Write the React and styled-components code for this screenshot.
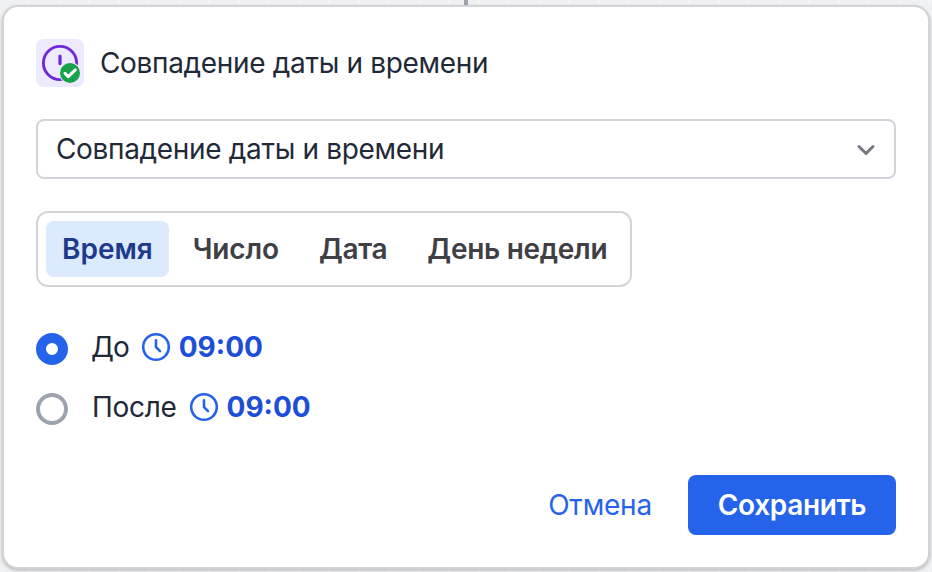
import React from "react";
import styled, { createGlobalStyle } from "styled-components";

const Global = createGlobalStyle`
  * { box-sizing: border-box; }
  body { margin: 0; background: #f0f1f3; font-family: Inter, "Noto Sans", sans-serif; color: #1f2937; overflow: hidden; }
  button { font: inherit; border: 0; background: none; padding: 0; cursor: pointer; }
`;
const Canvas = styled.main`
  height: 572px;
  padding: 0 2px;
  display: flex;
  flex-direction: column;
  align-items: center;
  background: radial-gradient(circle at 15px 15px, #fafafa 1px, transparent 1.6px) 14px -13px / 30px 30px;
`;
const Connector = styled.div`
  width: 4px;
  height: 5px;
  flex: none;
  background: #9ca3af;
`;
const Card = styled.section`
  width: 928px;
  height: 564px;
  flex: none;
  padding: 32px;
  background: #fff;
  border: 2px solid #d4d4d8;
  border-radius: 16px;
  box-shadow: 0 1px 3px rgba(0, 0, 0, 0.16), 0 2px 4px rgba(0, 0, 0, 0.1);
  display: flex;
  flex-direction: column;
`;
const Header = styled.header`
  display: flex;
  align-items: center;
  gap: 16px;
  height: 48px;
`;
const IconTile = styled.div`
  width: 48px;
  height: 48px;
  border-radius: 8px;
  background: #ede9fe;
  svg { display: block; }
`;
const Title = styled.h1`
  margin: 0;
  font-size: 28px;
  line-height: 40px;
  font-weight: 400;
  letter-spacing: -0.33px;
`;
const Select = styled.button`
  && { padding: 0 18px; border: 2px solid #d1d5db; font-size: 28px; letter-spacing: -0.33px; }
  height: 60px;
  margin-top: 32px;
  border-radius: 8px;
  display: flex;
  align-items: center;
  justify-content: space-between;
  color: #1f2937;
`;
const Tabs = styled.div`
  align-self: flex-start;
  width: 596px;
  height: 76px;
  margin-top: 32px;
  padding: 8px;
  border: 2px solid #d4d4d8;
  border-radius: 12px;
  display: flex;
  gap: 8px;
`;
const Tab = styled.button`
  && {
    padding: 0 16px;
    font-size: 28px;
    font-weight: 600;
    letter-spacing: ${(p) => p.$tracking}px;
    background: ${(p) => (p.$active ? "#dbeafe" : "transparent")};
  }
  border-radius: 8px;
  white-space: nowrap;
  color: ${(p) => (p.$active ? "#1e3a8a" : "#3f3f46")};
`;
const Options = styled.div`
  margin-top: 40px;
  display: grid;
  gap: 20px;
`;
const Option = styled.label`
  height: 40px;
  display: flex;
  align-items: center;
  font-size: 28px;
`;
const Radio = styled.span`
  width: 32px;
  height: 32px;
  margin: 4px 24px 0 0;
  border-radius: 50%;
  border: ${(p) => (p.$checked ? "10px solid #2563eb" : "4px solid #9ca3af")};
`;
const OptionLabel = styled.span`
  margin-left: ${(p) => p.$shift}px;
  letter-spacing: ${(p) => p.$tracking}px;
`;
const Time = styled.span`
  display: flex;
  align-items: center;
  gap: 8px;
  margin-left: 12px;
  font-weight: 700;
  color: #1d4ed8;
`;
const Footer = styled.footer`
  margin-top: auto;
  display: flex;
  justify-content: flex-end;
  gap: 36px;
  height: 60px;
`;
const Cancel = styled.button`
  && { font-size: 28px; color: #2563eb; letter-spacing: -0.2px; }
`;
const Save = styled.button`
  && { width: 208px; background: #2563eb; color: #fff; font-size: 28px; font-weight: 600; letter-spacing: -0.35px; }
  border-radius: 8px;
`;

const Clock = () => (
  <svg width="30" height="30" viewBox="0 0 30 30" fill="none" stroke="#2563eb" strokeWidth="2.6" strokeLinecap="round" strokeLinejoin="round">
    <circle cx="15" cy="15" r="12.8" />
    <path d="M15 8.4v6.8l4 4" />
  </svg>
);

const MatchIcon = () => (
  <svg width="48" height="48" viewBox="0 0 48 48" fill="none" strokeLinecap="round" strokeLinejoin="round">
    <circle cx="24" cy="24" r="16.6" stroke="#6d28d9" strokeWidth="2.9" />
    <path d="M24 17v7.6" stroke="#6d28d9" strokeWidth="3.2" />
    <circle cx="34" cy="34" r="11" fill="#ede9fe" />
    <circle cx="34" cy="34" r="10" fill="#16a34a" />
    <path d="m29 34.4 3.3 3.2 7-6.8" stroke="#fff" strokeWidth="3" />
  </svg>
);

const tabs = [
  { label: "Время", tracking: 0 },
  { label: "Число", tracking: -0.15 },
  { label: "Дата", tracking: -0.3 },
  { label: "День недели", tracking: -0.3 },
];
const options = [
  { label: "До", checked: true, shift: -1, tracking: -1 },
  { label: "После", checked: false, shift: 0, tracking: -0.3 },
];

export default function App() {
  return (
    <Canvas>
      <Global />
      <Connector />
      <Card>
        <Header>
          <IconTile><MatchIcon /></IconTile>
          <Title>Совпадение даты и времени</Title>
        </Header>
        <Select>
          Совпадение даты и времени
          <svg width="20" height="20" viewBox="0 0 20 20" fill="none" stroke="#737881" strokeWidth="3" strokeLinecap="round" strokeLinejoin="round"><path d="m3 7.5 7 7 7-7" /></svg>
        </Select>
        <Tabs>
          {tabs.map((t, i) => <Tab key={t.label} $active={i === 0} $tracking={t.tracking}>{t.label}</Tab>)}
        </Tabs>
        <Options>
          {options.map((o) => (
            <Option key={o.label}>
              <Radio $checked={o.checked} />
              <OptionLabel $shift={o.shift} $tracking={o.tracking}>{o.label}</OptionLabel>
              <Time><Clock />09:00</Time>
            </Option>
          ))}
        </Options>
        <Footer>
          <Cancel>Отмена</Cancel>
          <Save>Сохранить</Save>
        </Footer>
      </Card>
    </Canvas>
  );
}
